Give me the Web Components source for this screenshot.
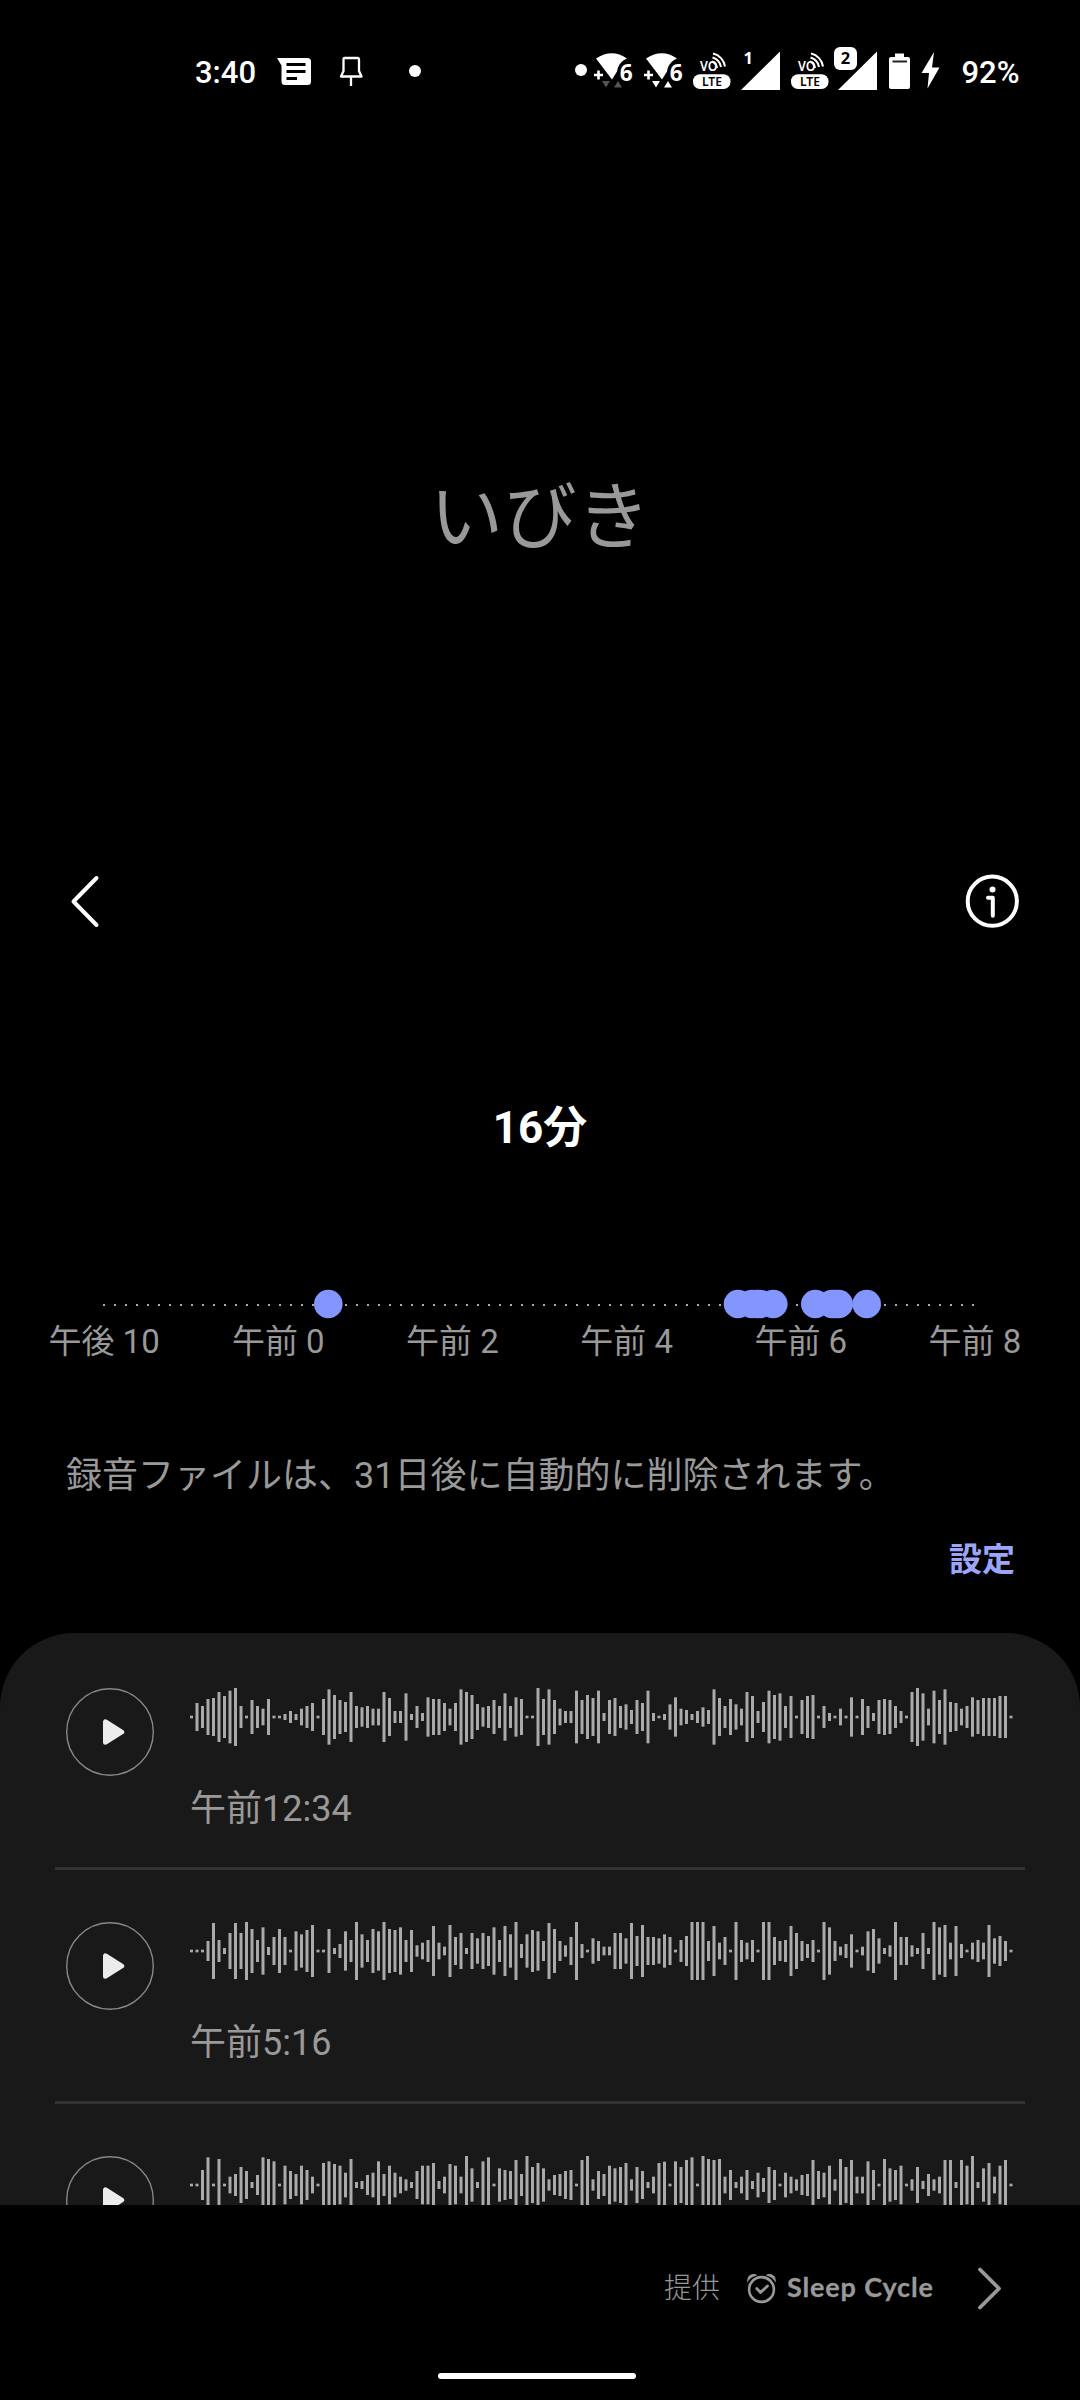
<!DOCTYPE html>
<html lang="ja">
<head>
<meta charset="utf-8">
<title>いびき</title>
<style>
html,body{margin:0;background:#000}
body{width:1080px;height:2400px;overflow:hidden;font-family:Roboto,"Noto Sans CJK JP",sans-serif;color:#999}
</style>
</head>
<body>
<snore-screen></snore-screen>
<script>
function define(name, html, setup) {
  customElements.define(name, class extends HTMLElement {
    connectedCallback() {
      if (this.shadowRoot) return;
      const t = document.createElement('template');
      t.innerHTML = html;
      this.attachShadow({ mode: 'open' }).append(t.content.cloneNode(true));
      if (setup) setup(this, this.shadowRoot);
    }
  });
}

/* Status bar: every glyph is a 60px-high tile laid side by side. */
const wifi = (x, c) => `<svg width="50" height="60" viewBox="${x} 40 50 60">
  <path fill="#fff" d="M${x + 6} 58.500Q${x + 22} 48 ${x + 37} 58.500L${x + 34} 60Q${x + 28} 64 ${x + 27} 71.500L${x + 22} 79.500Z"/>
  <path stroke="#fff" stroke-width="2.600" d="M${x + 4} 75H${x + 13}M${x + 8.5} 70.500V79.500"/>
  <path fill="${c}" d="M${x + 12} 81h8l-4 6.500zM${x + 24} 87.500h8l-4-6.500z"/>
  <text x="${x + 29.8}" y="80.500" font-size="23" font-weight="700" fill="#fff" font-family="Noto Sans" textLength="13" lengthAdjust="spacingAndGlyphs">6</text></svg>`;
const volte = x => `<svg width="44" height="60" viewBox="${x} 40 44 60">
  <text x="${x + 10}" y="71" font-size="14.500" font-weight="600" fill="#fff" font-family="Noto Sans" textLength="17.500" lengthAdjust="spacingAndGlyphs">VO</text>
  <g fill="none" stroke="#fff" stroke-width="2"><path d="M${x + 22} 61.500a8 8 0 0 1 5 6.500"/><path d="M${x + 22.5} 57.500a12 12 0 0 1 8.500 9.500"/><path d="M${x + 23} 53.500a15.500 15.500 0 0 1 12 13"/></g>
  <rect x="${x + 3}" y="74.300" width="37.500" height="14.700" rx="7" fill="#fff"/>
  <text x="${x + 12}" y="86.200" font-size="13" font-weight="600" fill="#000" font-family="Noto Sans" textLength="20" lengthAdjust="spacingAndGlyphs">LTE</text></svg>`;
define('status-bar', `<style>
:host{display:flex;box-sizing:border-box;height:100px;padding:40px 0 0 195px;color:#fff;font-size:31px;line-height:65px;font-weight:500;white-space:pre}
svg{display:block;flex:none}.t{width:75px}.gap{flex:0 0 110px}.p{margin-left:11.500px}
</style>
<span class="t">3:40</span>
<svg width="60" height="60" viewBox="270 40 60 60"><path fill="#fff" fill-rule="evenodd" d="M277 58H307.500Q311 58 311 61.500V81.500Q311 85 307.500 85H285Q281.500 85 281.500 81.500V65.500ZM286.500 63V66H305.500V63ZM286.500 70V73H305.500V70ZM286.500 77V80H297V77Z"/></svg>
<svg width="50" height="60" viewBox="330 40 50 60"><path fill="none" stroke="#fff" stroke-width="2.300" stroke-linejoin="round" d="M344.500 58H357.500Q359 58 359 60V71L361.500 76.500H341L343.500 71V60Q343.500 58 344.500 58ZM351 76.500V86"/></svg>
<svg width="60" height="60" viewBox="380 40 60 60"><circle cx="415" cy="71" r="6" fill="#fff"/></svg>
<span class="gap"></span>
<svg width="40" height="60" viewBox="550 40 40 60"><circle cx="581" cy="70" r="6" fill="#fff"/></svg>
${wifi(590, '#555')}${wifi(640, '#fff')}${volte(690)}
<svg width="54" height="60" viewBox="734 40 54 60"><path fill="#fff" d="M741 90L780 51.500V90Z"/><text x="743.500" y="64" font-size="16.500" font-weight="700" fill="#fff" font-family="Noto Sans">1</text></svg>
<svg width="2" height="60"></svg>${volte(788).replace('width="44"', 'width="42"').replace('40 44 60', '40 42 60').replace('viewBox="788', 'viewBox="790')}
<svg width="50" height="60" viewBox="832 40 50 60"><path fill="#fff" d="M838 90L877 51.500V90Z"/><rect x="833" y="46" width="25.500" height="25" rx="7" fill="#000"/><rect x="834" y="47" width="23" height="23" rx="6" fill="#fff"/><text x="840.800" y="64.300" font-size="16.500" font-weight="700" fill="#000" font-family="Noto Sans">2</text></svg>
<svg width="68" height="60" viewBox="882 40 68 60"><path fill="#fff" d="M895 53.500h9V57h4q2 0 2 2V87q0 2-2 2H891q-2 0-2-2V59q0-2 2-2h4Z"/><path stroke="#222" stroke-width="2" d="M892.500 61.500H907"/><path fill="#fff" d="M934 52L921.500 73H929L927.500 88.500L939.500 67.500H932Z"/></svg>
<span class="p">92%</span>`);

define('page-title', `<style>
:host{display:block;margin-top:369px;height:100px;line-height:99px;text-align:center;font-size:73.500px;font-weight:400}
</style><slot></slot>`);

define('tool-bar', `<style>
:host{display:flex;justify-content:space-between;align-items:center;height:100px;margin-top:282px;padding:0 57px 0 66px}
svg{display:block;fill:none;stroke:#fff;stroke-linecap:round;stroke-linejoin:round}
</style>
<svg width="40" height="60" viewBox="66 871 40 60"><path stroke-width="4" d="M96.500 878L73.500 901.500L96.500 925"/></svg>
<svg width="62" height="60" viewBox="961 871.300 62 60"><circle cx="992.300" cy="901.500" r="24.600" stroke-width="4"/><circle cx="992.500" cy="889.700" r="3" fill="#fff" stroke="none"/><path stroke-width="4" d="M988 898H992.800V916"/></svg>`);

define('total-time', `<style>
:host{display:block;margin-top:127px;height:100px;line-height:100px;text-align:center;font-size:44px;font-weight:700;color:#fff}
</style><slot></slot>`);

define('time-line', `<style>
:host{display:block;margin-top:106px;padding:0 18px 0 17px}
svg{display:block;margin-left:-17px}
div{display:grid;grid-template-columns:repeat(6,1fr);height:60px;line-height:60px;margin-top:-8px;text-align:center;font-size:33px;white-space:nowrap}
</style>
<svg width="1080" height="36" viewBox="0 1284 1080 36"></svg>
<div></div>`, (h, r) => {
  let s = '';
  for (let i = 0; i < 80; i++) s += `<rect x="${103 + 11 * i}" y="1304" width="2" height="2" fill="#aaa"/>`;
  for (const x of h.getAttribute('events').split(' ')) s += `<circle cx="${x}" cy="1304" r="14.300" fill="#8396ff"/>`;
  r.querySelector('svg').innerHTML = s;
  r.querySelector('div').innerHTML = h.getAttribute('labels').split(',').map(t => `<span>${t}</span>`).join('');
});

define('retention-note', `<style>
:host{display:block;padding:0 65px 0 66px;margin-top:74px}
p{margin:0;height:60px;line-height:60px;font-size:36px;white-space:nowrap}
a{display:block;margin-top:24px;height:60px;line-height:60px;text-align:right;font-size:33px;font-weight:700;color:#9ba5fb}
</style><p><slot></slot></p><a><slot name="action"></slot></a>`);

define('recording-list', `<style>
:host{display:block;box-sizing:border-box;height:572px;margin-top:43px;padding:3px 55px 0;overflow:hidden;background:#191919;border-radius:74px 74px 0 0}
</style><slot></slot>`);

/* Wave levels are half-heights in thirds of a pixel; 4 is a silent sample. */
define('recording-row', `<style>
:host{display:flex;box-sizing:border-box;height:234px;padding:52px 0 0 11px;border-bottom:3px solid #333}
svg{display:block;flex:none}
section{margin-left:36px}
p{margin:33px 0 0;height:60px;line-height:60px;font-size:36px}
</style>
<svg width="88" height="88" viewBox="0 0 88 88"><circle cx="44" cy="44" r="43.300" fill="none" stroke="#888" stroke-width="1.400"/><path fill="#ececec" stroke="#ececec" stroke-width="5" stroke-linejoin="round" d="M39.500 33.800V54.200L55.700 44Z"/></svg>
<section><svg class="w" width="823" height="58" viewBox="0 0 823 58"></svg><p><slot></slot></p></section>`, (h, r) => {
  r.querySelector('.w').innerHTML = h.getAttribute('wave').split(' ').map((v, i) =>
    `<rect x="${5.5 * i}" y="${(29 - v / 3).toFixed(2)}" width="3" height="${(v * 2 / 3).toFixed(2)}" fill="#aaa"/>`).join('');
});

define('provider-bar', `<style>
:host{display:flex;align-items:center;box-sizing:border-box;height:195px;padding:0 0 28px 664px;position:relative}
.b{font-size:28px;font-weight:300;line-height:60px;width:82px}
svg{display:block;flex:none}
.n{font:700 27px/60px Lato,sans-serif;letter-spacing:.85px;width:188px;margin-left:10px;margin-top:-3px;white-space:nowrap;-webkit-text-stroke:.3px #999}
i{position:absolute;left:438px;bottom:21px;width:198px;height:6px;border-radius:3px;background:#fff}
</style>
<span class="b">提供</span>
<svg width="31" height="32" viewBox="746 2272 31 32"><g fill="none" stroke="#999" stroke-linecap="round" stroke-linejoin="round"><circle cx="761.500" cy="2288.500" r="12.400" stroke-width="2.600"/><path stroke-width="2.800" d="M756.800 2287.500L760.500 2291.500L767.500 2285"/></g><path fill="#999" d="M747.200 2281.500Q746.500 2274 753 2273Q756 2272.700 757 2274.400Q750 2276 747.200 2281.500ZM775.800 2281.500Q776.500 2274 770 2273Q767 2272.700 766 2274.400Q773 2276 775.800 2281.500Z"/></svg>
<span class="n">Sleep Cycle</span>
<svg width="30" height="48" viewBox="974 2264 30 48"><path fill="none" stroke="#999" stroke-width="3.800" stroke-linecap="round" stroke-linejoin="round" d="M979 2268.500L998 2287.500L979 2306.500"/></svg>
<i></i>`);

define('snore-screen', `<style>:host{display:flex;flex-direction:column;width:1080px;height:2400px;background:#000}
:host>*{flex:none}</style>
<status-bar></status-bar>
<page-title>いびき</page-title>
<tool-bar></tool-bar>
<total-time>16分</total-time>
<time-line events="328.300 738 752 757 760 773.300 815.300 832 835 838.700 866.700" labels="午後 10,午前 0,午前 2,午前 4,午前 6,午前 8"></time-line>
<retention-note>録音ファイルは、31日後に自動的に削除されます。<span slot="action">設定</span></retention-note>
<recording-list>
<recording-row wave="4 42 33 54 57 75 63 79 87 33 4 51 33 25 54 4 4 9 18 9 25 33 42 4 54 83 66 51 45 75 33 29 33 25 25 75 57 18 18 71 9 33 12 59 54 54 42 25 42 83 75 66 39 29 33 51 33 71 33 59 54 4 4 87 54 83 51 25 18 18 79 51 66 57 79 12 51 57 33 38 21 51 42 79 12 4 9 38 59 25 21 9 18 29 21 83 57 33 54 38 25 75 63 18 45 79 66 71 33 63 4 51 63 66 4 33 12 4 25 4 59 4 54 33 12 51 54 51 33 18 4 75 87 71 25 79 51 83 45 42 25 33 59 51 57 57 57 63 63 4">午前12:34</recording-row>
<recording-row wave="4 4 4 30 84 33 9 54 84 54 87 66 33 71 12 42 66 42 4 59 50 63 78 4 4 66 9 21 59 33 87 50 33 66 59 87 66 63 71 33 63 17 25 33 75 25 13 78 42 54 9 54 38 54 45 71 33 75 50 87 21 50 63 59 30 84 66 30 17 42 87 21 4 38 30 13 13 54 54 38 84 45 78 42 42 38 50 42 4 33 45 87 87 87 30 75 25 42 4 87 33 25 33 4 87 87 42 30 33 75 54 30 21 33 4 87 71 30 13 21 50 4 13 59 66 38 9 17 87 42 42 17 9 54 9 87 71 78 25 75 21 4 25 33 25 78 38 45 30 4">午前5:16</recording-row>
<recording-row wave="4 4 45 83 4 78 4 25 33 54 42 9 30 83 78 71 4 58 42 33 58 45 25 4 66 71 63 58 37 78 9 12 30 37 71 33 58 37 25 17 9 42 58 58 66 12 25 63 58 25 87 50 9 71 83 4 50 45 42 75 33 87 54 66 50 17 30 33 42 45 4 75 87 17 42 33 58 50 54 66 17 54 42 9 25 66 70 4 71 54 75 83 4 87 78 75 78 25 45 9 25 45 12 37 21 54 45 4 37 25 17 30 33 75 42 37 58 17 78 54 75 25 25 71 45 4 78 50 45 58 4 17 54 12 33 17 25 75 75 9 75 58 87 9 50 66 25 58 75 4"></recording-row>
</recording-list>
<provider-bar></provider-bar>`);
</script>
</body>
</html>
